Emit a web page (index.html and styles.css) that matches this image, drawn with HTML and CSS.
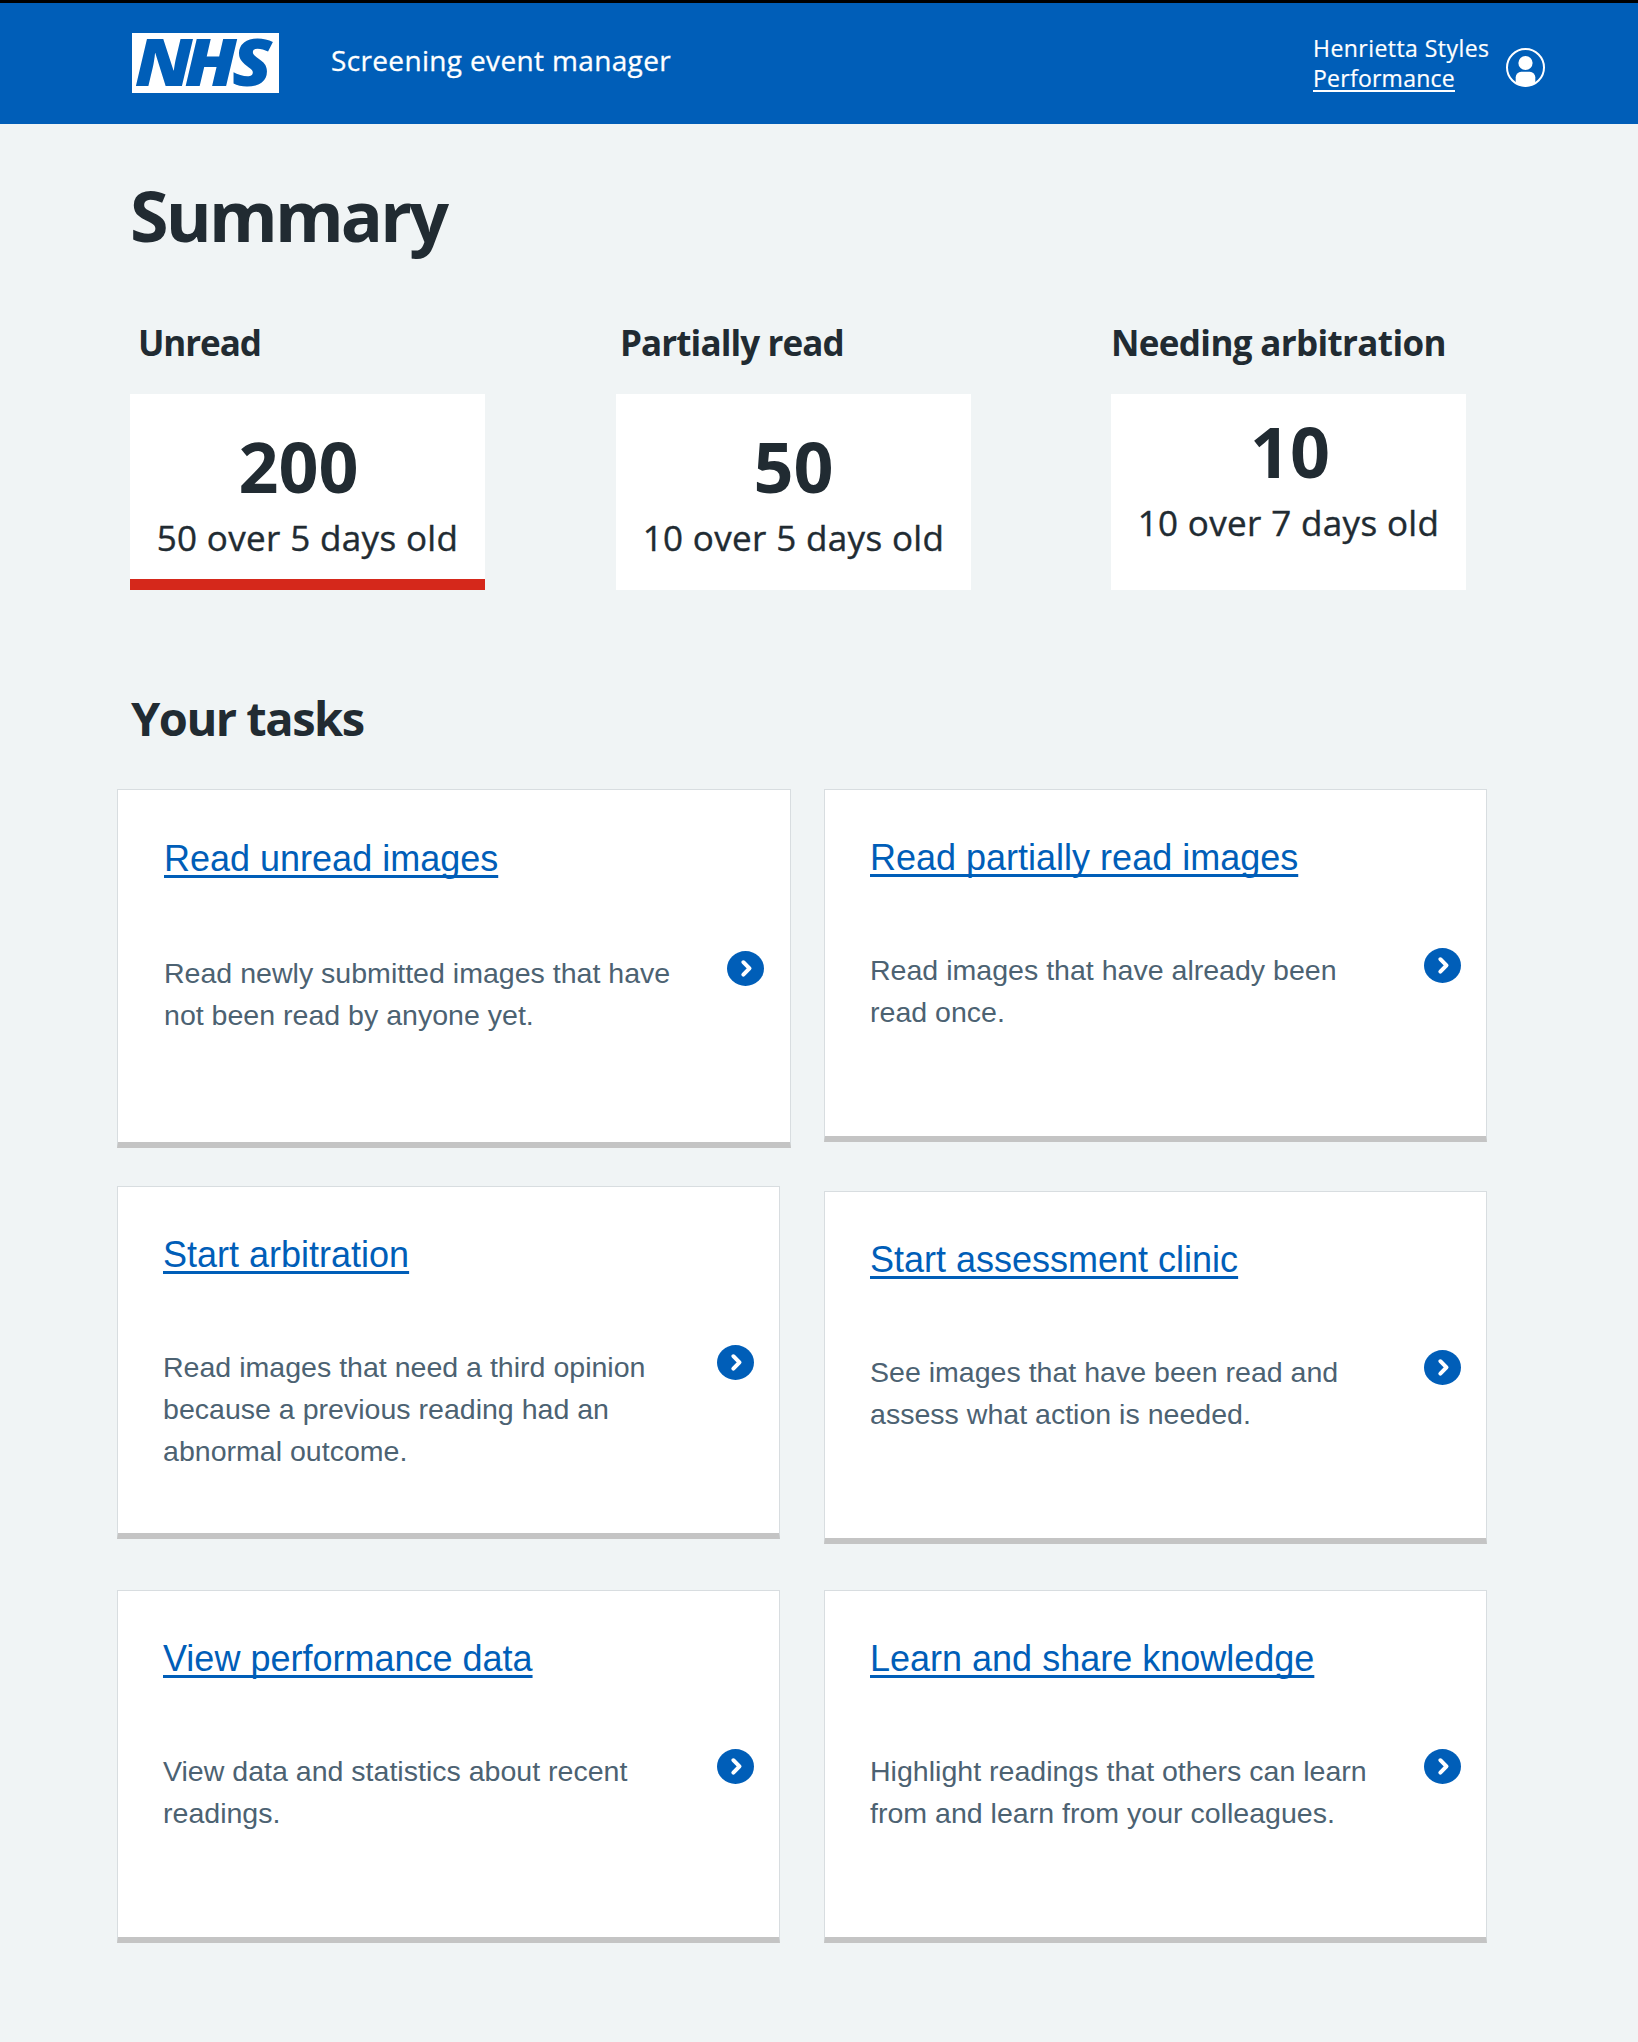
FILE: index.html
```html
<!DOCTYPE html>
<html lang="en">
<head>
<meta charset="utf-8">
<title>Screening event manager</title>
<link rel="stylesheet" href="styles.css">
</head>
<body>
<svg class="defs" width="0" height="0" aria-hidden="true">
  <symbol id="arrow" viewBox="0 0 36 35" preserveAspectRatio="none">
    <ellipse cx="18" cy="17.5" rx="18" ry="17.4" fill="#005eb8"/>
    <path d="M15.9 11.2 L21.9 17.4 L15.9 23.6" fill="none" stroke="#fff" stroke-width="3.9" stroke-linecap="round" stroke-linejoin="round"/>
  </symbol>
</svg>
<header class="header">
  <svg class="logo" viewBox="0 0 147 60" role="img" aria-label="NHS">
    <rect width="147" height="60" fill="#fff"/>
    <text class="logo-text" x="2.4 47.2 90" y="53" transform="scale(1.11 1)">NHS</text>
  </svg>
  <div class="service">Screening event manager</div>
  <div class="user">
    <div class="user-name">Henrietta Styles</div>
    <a class="user-link" href="#">Performance</a>
  </div>
  <svg class="avatar" viewBox="0 0 39 39">
    <clipPath id="disc"><circle cx="19.5" cy="19.5" r="19"/></clipPath>
    <circle cx="19.5" cy="19.5" r="18.5" fill="none" stroke="#fff" stroke-width="2"/>
    <circle cx="19.5" cy="15" r="7.1" fill="#fff"/>
    <rect x="9.7" y="23.8" width="19.6" height="20" rx="5.5" fill="#fff" clip-path="url(#disc)"/>
  </svg>
</header>
<main>
  <h1 class="title">Summary</h1>
  <section class="stats">
    <div class="stat">
      <h3 class="stat-head unread">Unread</h3>
      <div class="stat-box alert">
        <div class="num shifted">200</div>
        <div class="sub">50 over 5 days old</div>
      </div>
    </div>
    <div class="stat">
      <h3 class="stat-head partial">Partially read</h3>
      <div class="stat-box">
        <div class="num">50</div>
        <div class="sub">10 over 5 days old</div>
      </div>
    </div>
    <div class="stat">
      <h3 class="stat-head arbitration">Needing arbitration</h3>
      <div class="stat-box high">
        <div class="num">10</div>
        <div class="sub">10 over 7 days old</div>
      </div>
    </div>
  </section>
  <h2 class="tasks-title">Your tasks</h2>
  <section class="tasks">
    <div class="col left">
      <article class="card large">
        <a class="card-title" href="#">Read unread images</a>
        <div class="card-row"><p>Read newly submitted images that have not been read by anyone yet.</p><svg class="arrow"><use href="#arrow"/></svg></div>
      </article>
      <article class="card">
        <a class="card-title" href="#">Start arbitration</a>
        <div class="card-row"><p>Read images that need a third opinion because a previous reading had an abnormal outcome.</p><svg class="arrow"><use href="#arrow"/></svg></div>
      </article>
      <article class="card">
        <a class="card-title" href="#">View performance data</a>
        <div class="card-row"><p>View data and statistics about recent readings.</p><svg class="arrow"><use href="#arrow"/></svg></div>
      </article>
    </div>
    <div class="col right">
      <article class="card">
        <a class="card-title" href="#">Read partially read images</a>
        <div class="card-row"><p>Read images that have already been read once.</p><svg class="arrow"><use href="#arrow"/></svg></div>
      </article>
      <article class="card">
        <a class="card-title" href="#">Start assessment clinic</a>
        <div class="card-row"><p>See images that have been read and assess what action is needed.</p><svg class="arrow"><use href="#arrow"/></svg></div>
      </article>
      <article class="card">
        <a class="card-title" href="#">Learn and share knowledge</a>
        <div class="card-row"><p>Highlight readings that others can learn from and learn from your colleagues.</p><svg class="arrow"><use href="#arrow"/></svg></div>
      </article>
    </div>
  </section>
</main>
</body>
</html>
```
FILE: styles.css
```css
* { box-sizing: border-box; }
body {
  margin: 0;
  min-height: 2042px;
  background: #f0f4f5;
  color: #212b32;
  font-family: "Open Sans", "Noto Sans", sans-serif;
}
h1, h2, h3, p { margin: 0; }
.defs { display: block; height: 0; }

.header {
  display: flex;
  align-items: flex-start;
  height: 124px;
  padding: 30px 93px 0 132px;
  border-top: 3px solid #000;
  background: #005eb8;
  color: #fff;
}
.logo { width: 147px; height: 60px; flex: none; overflow: visible; }
.logo-text { font: italic 800 66px "Open Sans", sans-serif; fill: #005eb8; }
.service { margin: 7px 0 0 52px; font-size: 28px; line-height: 40px; letter-spacing: 0.35px; white-space: nowrap; -webkit-text-stroke: 0.3px; }
.user { margin-left: auto; width: 193px; font-size: 23px; line-height: 30px; white-space: nowrap; -webkit-text-stroke: 0.2px; }
.user-name { letter-spacing: 0.45px; }
.user-link { display: block; width: max-content; letter-spacing: 0.25px; color: #fff; text-decoration: underline; text-decoration-thickness: 1.5px; text-underline-offset: 3px; text-decoration-skip-ink: none; }
.avatar { width: 39px; height: 39px; margin-top: 15px; flex: none; }

.title { margin: 51px 0 0 130px; font-size: 70px; line-height: 80px; letter-spacing: -2.8px; }

.stats { display: grid; grid-template-columns: 355px 355px 355px; column-gap: 136px; margin: 66px 0 0 130px; }
.stat:nth-child(2) { margin-left: -5px; margin-right: 5px; }
.stat:nth-child(3) { margin-left: -1px; margin-right: 1px; }
.stat-head { font-size: 35px; line-height: 44px; white-space: nowrap; }
.unread { padding-left: 8px; letter-spacing: -1.1px; }
.partial { padding-left: 4px; letter-spacing: -0.9px; }
.arbitration { letter-spacing: -0.65px; }
.stat-box { height: 196px; margin-top: 29px; padding-top: 37px; background: #fff; text-align: center; }
.stat-box.alert { border-bottom: 11px solid #d5281b; }
.stat-box.high { padding-top: 22px; }
.num { font-size: 70px; font-weight: 700; line-height: 70px; }
.num.shifted { padding-right: 18px; }
.stat-box.high .num { padding-left: 3px; }
.sub { margin-top: 15px; font-size: 35px; line-height: 44px; letter-spacing: 0.35px; white-space: nowrap; -webkit-text-stroke: 0.4px; }

.tasks-title { margin: 100px 0 0 131px; font-size: 47px; line-height: 56px; letter-spacing: -1.5px; }

.tasks { display: flex; gap: 33px; margin: 43px 0 0 117px; font-family: "Liberation Sans", Arial, sans-serif; }
.col { display: flex; flex-direction: column; align-items: flex-start; }
.col.left { width: 674px; gap: 51px; }
.col.right { width: 663px; height: 1154px; gap: 46px; }
.card {
  width: 663px;
  height: 353px;
  padding: 46px 25px 0 45px;
  border: 1px solid #d8dde0;
  border-bottom: 6px solid #c4c4c4;
  background: #fff;
}
.card.large { width: 674px; height: 359px; padding: 47px 26px 0 46px; margin-bottom: -13px; }
.col.right .card:nth-child(1) { margin-bottom: 3px; }
.card-title {
  display: block;
  font-size: 36px;
  line-height: 44px;
  color: #005eb8;
  text-decoration: underline;
  text-decoration-thickness: 2.5px;
  text-underline-offset: 4px;
  text-decoration-skip-ink: none;
}
.card-row { display: flex; justify-content: space-between; align-items: flex-start; margin-top: 69px; }
.large .card-row { margin-top: 71px; }
.card-row p { width: 520px; font-size: 28.55px; line-height: 42px; color: #4c6272; }
.arrow { width: 37px; height: 35px; margin-top: -1px; flex: none; }
```
